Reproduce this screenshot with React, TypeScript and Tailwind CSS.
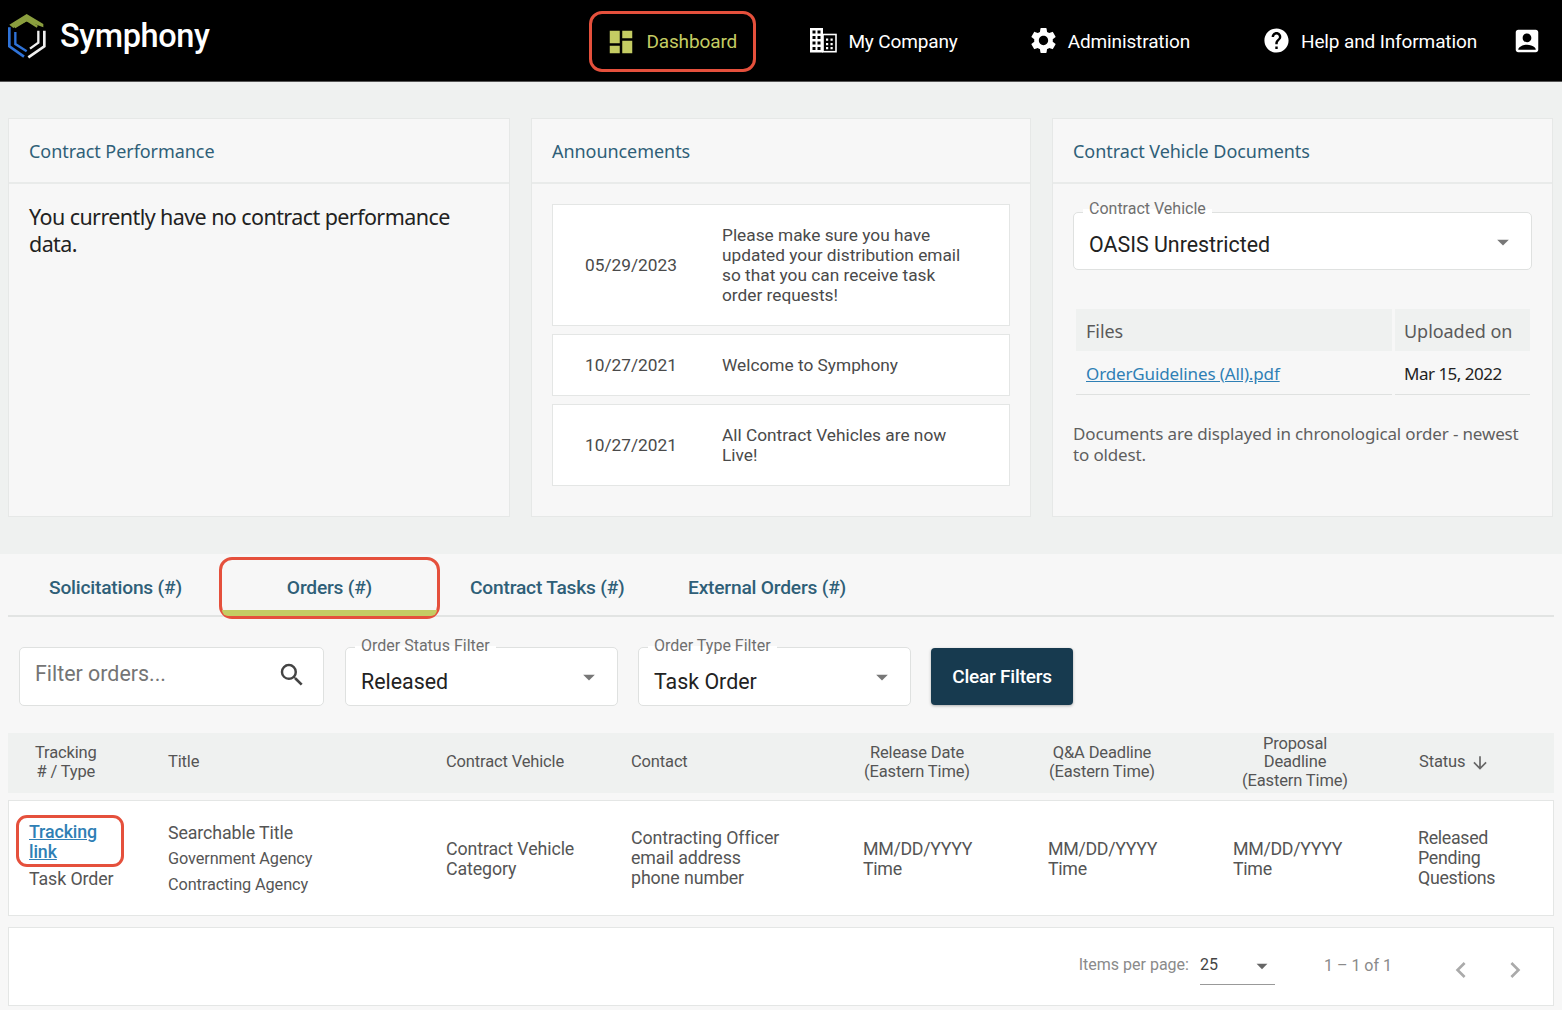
import { MdDashboard, MdSettings, MdHelp, MdAccountBox, MdSearch, MdArrowDownward, MdChevronLeft, MdChevronRight, MdArrowDropDown } from "react-icons/md";

function Logo() {
  return (
    <svg width="56" height="56" viewBox="0 0 168 168" fill="none" className="shrink-0">
      <path d="M28 50 L80 18 L130 48 L130 58 L80 40 L40 60 Z" fill="#8a9e3e" />
      <path d="M44 58 L80 36 L112 56" stroke="#8a9e3e" strokeWidth="7" />
      <path d="M28 58 L28 115 L72 146" stroke="#2f73d8" strokeWidth="8" />
      <path d="M46 72 L46 108 L80 130" stroke="#2f73d8" strokeWidth="7" />
      <path d="M133 68 L133 115 L85 148" stroke="#f0f0f0" strokeWidth="8" />
      <path d="M115 68 L115 104 L90 122" stroke="#f0f0f0" strokeWidth="7" />
    </svg>
  );
}

function BuildingIcon() {
  return (
    <svg width="27" height="25" viewBox="0 0 27 25" className="mr-[11px] shrink-0">
      <rect x="0" y="0" width="13" height="24.5" fill="#fff" />
      <path d="M2.5 2.5h3v3h-3zM7.5 2.5h3v3h-3zM2.5 8h3v3h-3zM7.5 8h3v3h-3zM2.5 13.5h3v3h-3zM7.5 13.5h3v3h-3zM2.5 19h3v3h-3zM7.5 19h3v3h-3z" fill="#000" />
      <rect x="13" y="6.5" width="13" height="17.2" fill="none" stroke="#fff" strokeWidth="1.6" />
      <path d="M16 10.5h2.2v2.2H16zM20.5 10.5h2.2v2.2h-2.2zM16 15h2.2v2.2H16zM20.5 15h2.2v2.2h-2.2zM16 19h2.2v2.2H16zM20.5 19h2.2v2.2h-2.2z" fill="#fff" />
    </svg>
  );
}

function NavItem({ icon, label, className }: { icon: React.ReactNode; label: string; className: string }) {
  return (
    <div className={`flex items-center text-white ${className}`}>
      {icon}
      <span className="pt-[4px] text-[19px] tracking-[-0.13px]">{label}</span>
    </div>
  );
}

function Card({ title, children, className }: { title: string; children: React.ReactNode; className: string }) {
  return (
    <section className={`h-[399px] border border-[#e6e8e7] bg-[#f7f7f7] ${className}`}>
      <h2 className="flex h-[65px] items-center border-b-2 border-[#e9ebea] px-5 pt-[2px] font-['Noto_Sans'] text-[18px] tracking-[-0.06px] text-[#2f5f78]">
        {title}
      </h2>
      {children}
    </section>
  );
}

function Announcement({ date, text, className }: { date: string; text: string; className: string }) {
  return (
    <div className={`flex items-center border border-[#e4e6e5] bg-white text-[17.3px] leading-[20px] text-[#4a4a4a] ${className}`}>
      <div className="w-[169px] shrink-0 pl-8">{date}</div>
      <div className="-mt-[1px] w-[256px]">{text}</div>
    </div>
  );
}

function SelectField({ label, value, className, upper }: { label: string; value: string; className: string; upper?: boolean }) {
  return (
    <div className={`relative rounded-[5px] border border-[#dfe1e0] bg-white ${upper ? "h-[58px]" : "h-[59px]"} ${className}`}>
      <span className={`absolute left-[9px] bg-[linear-gradient(#f7f7f7_50%,#ffffff_50%)] px-[6px] text-[16px] leading-[20px] text-[#6f6f6f] ${upper ? "-top-[14px]" : "-top-[12px]"}`}>
        {label}
      </span>
      <div className={`flex h-full items-center justify-between pl-[15px] pr-[14px] text-[21.4px] text-[#222] ${upper ? "pt-[8px]" : "pt-[11px]"}`}>
        <span>{value}</span>
        <MdArrowDropDown size={28} className={upper ? "-mt-[6px] text-[#777]" : "-mt-[10px] text-[#777]"} />
      </div>
    </div>
  );
}

const gridCols = "grid grid-cols-[159px_278px_185px_232px_185px_185px_186px_1fr]";

export default function App() {
  return (
    <div className="relative min-h-[1010px] overflow-hidden bg-[#eff1f0] font-['Roboto',sans-serif]">
      <header className="flex h-[82px] items-center justify-between border-b border-[#555] bg-black pr-[20px]">
        <div className="-mt-[9px] flex items-center">
          <Logo />
          <span className="ml-[4px] text-[32.5px] font-medium tracking-[-0.4px] text-white">Symphony</span>
        </div>
        <nav className="flex items-center">
          <div className="relative mr-[54px] mt-[2px] flex h-[61px] w-[167px] items-center rounded-[13px] border-[3px] border-[#e5503c] pl-[14px] text-[#c4cc63]">
            <MdDashboard size={30} className="mr-[10px]" />
            <span className="pt-[2px] text-[19px] tracking-[-0.13px]">Dashboard</span>
          </div>
          <NavItem icon={<BuildingIcon />} label="My Company" className="mr-[70px]" />
          <NavItem icon={<MdSettings size={31} className="mr-[9px]" />} label="Administration" className="mr-[72px]" />
          <NavItem icon={<MdHelp size={29} className="mr-[10px]" />} label="Help and Information" className="mr-[35px]" />
          <MdAccountBox size={30} className="text-white" />
        </nav>
      </header>

      <main className="flex gap-[21px] px-[8px] pt-[36px]">
        <Card title="Contract Performance" className="w-[502px]">
          <p className="px-5 pt-[19px] font-['Noto_Sans'] text-[21.5px] leading-[27px] tracking-[-0.58px] text-[#222]">
            You currently have no contract performance data.
          </p>
        </Card>
        <Card title="Announcements" className="w-[500px]">
          <div className="flex flex-col gap-[8px] px-5 pt-[20px]">
            <Announcement className="h-[122px]" date="05/29/2023" text="Please make sure you have updated your distribution email so that you can receive task order requests!" />
            <Announcement className="h-[62px]" date="10/27/2021" text="Welcome to Symphony" />
            <Announcement className="h-[82px]" date="10/27/2021" text="All Contract Vehicles are now Live!" />
          </div>
        </Card>
        <Card title="Contract Vehicle Documents" className="w-[501px]">
          <div className="px-[20px] pt-[28px]">
            <SelectField upper label="Contract Vehicle" value="OASIS Unrestricted" className="w-[459px]" />
            <div className="ml-[3px] mt-[39px] flex gap-[3px]">
              <div className="w-[316px] border-b border-[#dfe1e0]">
                <div className="flex h-[42px] items-center bg-[#eff1f0] px-[10px] pt-[2px] font-['Noto_Sans'] text-[18px] tracking-[-0.05px] text-[#5a5a5a]">Files</div>
                <div className="flex h-[43px] items-center px-[10px] pt-[2px] font-['Noto_Sans'] text-[17px] tracking-[-0.13px] text-[#2f7fb5] underline">OrderGuidelines (All).pdf</div>
              </div>
              <div className="w-[135px] border-b border-[#dfe1e0]">
                <div className="flex h-[42px] items-center bg-[#eff1f0] px-[9px] pt-[2px] font-['Noto_Sans'] text-[18px] tracking-[-0.05px] text-[#5a5a5a]">Uploaded on</div>
                <div className="flex h-[43px] items-center px-[9px] pt-[2px] font-['Noto_Sans'] text-[17px] tracking-[-0.5px] text-[#222]">Mar 15, 2022</div>
              </div>
            </div>
            <p className="mt-[28px] font-['Noto_Sans'] text-[17px] leading-[21px] tracking-[-0.15px] text-[#5f5f5f]">
              Documents are displayed in chronological order - newest to oldest.
            </p>
          </div>
        </Card>
      </main>

      <section className="mt-[37px] h-[456px] bg-[#f7f7f7] px-[8px]">
        <div className="flex h-[63px] items-stretch border-b-2 border-[#e2e4e3] text-[19.2px] font-medium tracking-[-0.2px] text-[#2f5f78]">
          <div className="flex w-[211px] items-center pl-[41px] pt-[7px]">Solicitations (#)</div>
          <div className="relative -mb-[2px] mt-[3px] flex h-[62px] w-[221px] items-center justify-center rounded-[13px] border-[3px] border-[#e5503c]">
            Orders (#)
            <span className="absolute bottom-0 left-0 right-0 h-[6px] rounded-b-[8px] bg-[#c4cc63]" />
          </div>
          <div className="flex w-[248px] items-center pl-[30px] pt-[7px]">Contract Tasks (#)</div>
          <div className="flex items-center pt-[7px]">External Orders (#)</div>
        </div>

        <div className="flex items-start pl-[11px] pt-[30px]">
          <div className="mr-[21px] flex h-[59px] w-[305px] items-center justify-between rounded-[5px] border border-[#dfe1e0] bg-white pb-[4px] pl-[15px] pr-[16px] text-[21.4px] text-[#757575]">
            <span>Filter orders...</span>
            <MdSearch size={30} className="text-[#444]" />
          </div>
          <SelectField label="Order Status Filter" value="Released" className="mr-[20px] w-[273px]" />
          <SelectField label="Order Type Filter" value="Task Order" className="mr-[20px] w-[273px]" />
          <button className="mt-px h-[57px] w-[142px] rounded-[4px] bg-[#173a4f] pt-[2px] text-[19px] font-medium tracking-[-0.2px] text-white shadow-[0_1px_3px_rgba(0,0,0,0.3)]">
            Clear Filters
          </button>
        </div>

        <div className={`${gridCols} mt-[27px] h-[60px] items-center bg-[#eff1f0] pb-[1px] pl-px text-[16.5px] leading-[18.5px] tracking-[-0.15px] text-[#555]`}>
          <div className="ml-[26px] w-fit text-center">Tracking<br /># / Type</div>
          <div>Title</div>
          <div>Contract Vehicle</div>
          <div>Contact</div>
          <div className="w-[108px] text-center">Release Date<br />(Eastern Time)</div>
          <div className="w-[108px] text-center">Q&amp;A Deadline<br />(Eastern Time)</div>
          <div className="ml-[8px] w-[108px] text-center">Proposal Deadline<br />(Eastern Time)</div>
          <div className="flex items-center">Status<MdArrowDownward size={20} className="ml-[5px] text-[#666]" /></div>
        </div>

        <div className={`${gridCols} mt-[7px] h-[116px] items-center border border-[#e4e6e5] bg-white text-[17.8px] leading-[20px] tracking-[-0.1px] text-[#555]`}>
          <div className="relative -mt-[5px] pl-[20px]">
            <a className="block w-[80px] font-medium text-[#2f7fb5] underline">Tracking link</a>
            <span className="absolute -top-[7px] left-[7px] h-[52px] w-[108px] rounded-[11px] border-[3px] border-[#e5503c]" />
            <div className="mt-[7px]">Task Order</div>
          </div>
          <div className="pt-[2px]">
            <div>Searchable Title</div>
            <div className="mt-[6px] text-[16.3px]">Government Agency</div>
            <div className="mt-[6px] text-[16.3px]">Contracting Agency</div>
          </div>
          <div className="pt-[2px]">Contract Vehicle<br />Category</div>
          <div>Contracting Officer<br />email address<br />phone number</div>
          <div className="pt-[2px] tracking-[-0.3px]">MM/DD/YYYY<br />Time</div>
          <div className="pt-[2px] tracking-[-0.3px]">MM/DD/YYYY<br />Time</div>
          <div className="pt-[2px] tracking-[-0.3px]">MM/DD/YYYY<br />Time</div>
          <div className="-ml-px tracking-[-0.3px]">Released<br />Pending<br />Questions</div>
        </div>

        <div className="mt-[11px] flex h-[79px] items-center justify-end border border-[#e4e6e5] bg-white pr-[22px] text-[16px] text-[#8a8a8a]">
          <span className="-mt-[4px] mr-[11px]">Items per page:</span>
          <div className="mr-[49px] mt-[2px] flex h-[34px] w-[75px] items-start justify-between border-b border-[#999] pt-[2px] text-[#444]">
            <span>25</span>
            <MdArrowDropDown size={26} className="text-[#666]" />
          </div>
          <span className="-mt-[2px] mr-[53px]">1 – 1 of 1</span>
          <MdChevronLeft size={32} className="mr-[22px] mt-[6px] text-[#aaa]" />
          <MdChevronRight size={32} className="mt-[6px] text-[#aaa]" />
        </div>
      </section>
    </div>
  );
}
